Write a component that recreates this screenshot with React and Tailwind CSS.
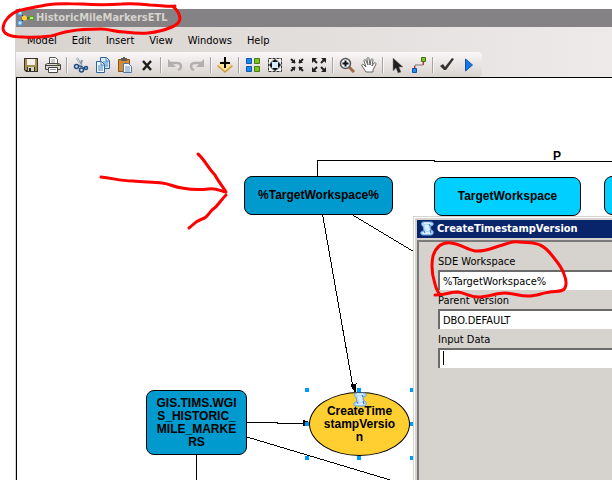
import { useState } from "react";

// Toolbar drawings, all on a 16x16 grid
const icons = {
  save: (
    <>
      <path d="M1 1h14v14H3l-2-2z" fill="#3a352b" />
      <path d="M2 2h2v11H2zM12 2h2v12h-2z" fill="#a88f4c" />
      <path d="M4 2h8v6H4z" fill="#f4f1ea" />
      <path d="M3 8h10v2H3z" fill="#a88f4c" />
      <path d="M5 10h6v4H5z" fill="#d8d4cc" />
      <path d="M6 11h2v3H6z" fill="#222" />
    </>
  ),
  print: (
    <>
      <path d="M4.500.5h6l2 2v4h-8z" fill="#fff" stroke="#555" />
      <path d="M6 3h4M6 5h4" stroke="#999" />
      <path d="M.5 7.500l2-1h11l2 1v5H.5z" fill="#dedad3" stroke="#444" />
      <path d="M1 8.500h14" stroke="#444" />
      <path d="M3.500 10.500h9v5h-9z" fill="#fff" stroke="#444" />
      <path d="M12 7.500h2" stroke="#6ea81c" />
      <path d="M5 12.500h6" stroke="#999" />
    </>
  ),
  cut: (
    <>
      <path d="M4 1l5 9M9 3L7 10" stroke="#8092a4" strokeWidth="2" fill="none" />
      <path d="M4 1l4 8" stroke="#dfe6ee" fill="none" />
      <circle cx="3.500" cy="9.500" r="2" fill="none" stroke="#1f4b86" strokeWidth="1.500" />
      <circle cx="8.500" cy="13" r="2" fill="none" stroke="#1f4b86" strokeWidth="1.500" />
      <circle cx="13" cy="11" r="1.500" fill="none" stroke="#1f4b86" strokeWidth="1.500" />
      <path d="M5 9h3l3 2" stroke="#1f4b86" fill="none" />
    </>
  ),
  copy: (
    <>
      <path d="M5.500.5h6l3 3v8h-9z" fill="#dcebfa" stroke="#2d649d" />
      <path d="M11 1v3h3M8 5h5M8 7h5M8 9h5" stroke="#4f87bd" fill="none" />
      <path d="M1.500 4.500h5l3 3v8h-8z" fill="#eef6ff" stroke="#2d649d" />
      <path d="M6 5v3h3M3 9h5M3 11h5M3 13h5" stroke="#4f87bd" fill="none" />
    </>
  ),
  paste: (
    <>
      <path d="M1.500 2.500h11v12h-11z" fill="#d18a35" stroke="#8a5318" />
      <path d="M4 1h6v3H4z" fill="#5e5a55" />
      <path d="M6 0h2v2H6z" fill="#5e5a55" />
      <path d="M6.500 6.500h5l3 3v6h-8z" fill="#f2f7fd" stroke="#52779e" />
      <path d="M8 10h5M8 12h5M8 14h5" stroke="#6b98c6" />
    </>
  ),
  remove: <path d="M4 4l8 9M12 4l-8 9" stroke="#1d1d1d" strokeWidth="2.500" fill="none" />,
  undo: (
    <>
      <path d="M4 6h6c4 0 5 3 3 6l-2 1" stroke="#b3afaf" strokeWidth="2.500" fill="none" />
      <path d="M1 2v8h8z" fill="#b3afaf" />
    </>
  ),
  redo: (
    <>
      <path d="M12 6H6c-4 0-5 3-3 6l2 1" stroke="#b3afaf" strokeWidth="2.500" fill="none" />
      <path d="M15 2v8H7z" fill="#b3afaf" />
    </>
  ),
  add: (
    <>
      <path d="M0 9l8-6 8 6-8 7z" fill="#c99a38" />
      <path d="M1 8l7-5 7 5-7 6z" fill="#fbe29a" />
      <path d="M8 0v11M3 6h10" stroke="#000" strokeWidth="2" />
    </>
  ),
  tiles: (
    <>
      <path d="M1.500 1.500h5v5h-5zM1.500 9.500h5v5h-5z" fill="#1c86f2" stroke="#0a58b4" />
      <path d="M9.500 1.500h5v5h-5zM9.500 9.500h5v5h-5z" fill="#7fc31c" stroke="#437f0a" />
    </>
  ),
  extent: (
    <>
      <path d="M1.500 1.500h13v13h-13z" fill="#f6f6f6" stroke="#333" strokeDasharray="3 1" />
      <circle cx="8" cy="8" r="5" fill="#d5edf8" stroke="#8a8a8a" />
      <path d="M8 2l3 3H5zM8 14l3-3H5zM2 8l3-3v6zM14 8l-3-3v6z" fill="#111" />
    </>
  ),
  shrink: (
    <>
      <path d="M2 2l4 4M14 2l-4 4M2 14l4-4M14 14l-4-4" stroke="#222" strokeWidth="2" />
      <path d="M6 2v4H2zM10 2v4h4zM6 14v-4H2zM10 14v-4h4z" fill="#222" />
    </>
  ),
  grow: (
    <>
      <path d="M2 2l4 4M14 2l-4 4M2 14l4-4M14 14l-4-4" stroke="#222" strokeWidth="2" />
      <path d="M1 1h5L1 6zM15 1h-5l5 5zM1 15h5l-5-5zM15 15h-5l5-5z" fill="#222" />
    </>
  ),
  zoom: (
    <>
      <path d="M10 10l5 5" stroke="#a5694d" strokeWidth="3" />
      <circle cx="6.500" cy="6.500" r="5" fill="#eef7fc" stroke="#555" strokeWidth="1.500" />
      <path d="M6.500 3.500v6M3.500 6.500h6" stroke="#111" strokeWidth="2" />
    </>
  ),
  pan: (
    <path
      d="M5 15L1 9c-1-2 1-2 2-1l2 2-2-6c0-2 2-2 2 0l2 4-1-6c0-2 2-2 2 0l1 6 1-5c0-2 2-1 2 0l-1 6 2-3c1-1 2 0 2 1l-3 6v2z"
      fill="#fff"
      stroke="#666"
    />
  ),
  select: <path d="M4 1v13l3-3 2 5 3-1-2-5h4z" fill="#1f1f1f" stroke="#888" strokeWidth=".5" />,
  connect: (
    <>
      <path d="M4 11V8h8V5" stroke="#777" fill="none" />
      <path d="M3.500 9v3M12.500 5v3" stroke="#e02020" />
      <path d="M10.500.5h4v4h-4z" fill="#86c51e" stroke="#3c720b" />
      <path d="M1.500 11.500h4v4h-4z" fill="#2a8cf0" stroke="#0d4ea6" />
    </>
  ),
  check: <path d="M1 9l3-2 2 3 7-9 2 1-8 11H5z" fill="#333" />,
  run: <path d="M4.500 2v12l7-6z" fill="#1877e6" stroke="#0c55ae" />,
};

const toolGroups = [
  ["save", "print"],
  ["cut", "copy", "paste", "remove"],
  ["undo", "redo"],
  ["add"],
  ["tiles", "extent", "shrink", "grow"],
  ["zoom", "pan"],
  ["select", "connect"],
  ["check", "run"],
];

const menus = ["Model", "Edit", "Insert", "View", "Windows", "Help"];

const ScriptIcon = ({ className }) => (
  <svg viewBox="0 0 16 16" className={className}>
    <path d="M4 1h8c3 0 3 4 0 4h-1l1 4c3 0 3 5 0 5H4c-3 0-3-4 0-4h1L4 5C2 5 2 1 4 1z" fill="#b5daf8" stroke="#6ba4d8" />
    <path d="M5 2h6M6 5h4M6 7h4M7 9h4M4 12h7" stroke="#fff" />
    <path d="M10 3l1 2M5 10l1 2M11 9l1 3" stroke="#2f6eae" fill="none" />
  </svg>
);

const ModelIcon = () => (
  <svg viewBox="0 0 18 16" className="h-4 w-[18px]">
    <path d="M4 3l5 5-5 5M9 8h5" stroke="#333" fill="none" />
    <path d="M2 1h4v4H2zM2 11h4v4H2z" fill="#c4e8ff" stroke="#3b96e0" />
    <circle cx="8.500" cy="8" r="2.500" fill="#ffd22e" />
    <path d="M13.500 6.500h4v3h-4z" fill="#b6f06a" stroke="#5aa51f" />
  </svg>
);

const Toolbar = () => (
  <div className="flex h-[25px] w-fit items-center rounded-r bg-linear-to-b from-[#fbf7f9] to-[#d9d3ce] pl-1 pr-0.5">
    {toolGroups.map((group, i) => (
      <div key={i} className="flex items-center">
        {i > 0 && <span className="mx-0.5 h-4 w-0.5 border-l border-[#a5a2a2] bg-[#f8f6f6]" />}
        {group.map((name) => (
          <button key={name} aria-label={name} className="flex h-6 w-[22px] items-center justify-center">
            <svg viewBox="0 0 16 16" className="h-4 w-4">
              {icons[name]}
            </svg>
          </button>
        ))}
      </div>
    ))}
  </div>
);

// Coordinates are relative to the canvas corner
const Connectors = () => (
  <svg className="absolute inset-0 h-full w-full" fill="none" stroke="#000" shapeRendering="crispEdges">
    <path d="M300.500 98V82.500H415l5 1H900" />
    <path d="M305.500 136l31 176" />
    <path d="M334 136l90 54" />
    <path d="M230 344.500h30l1 1h31" />
    <path d="M230 359l190 57" />
    <path d="M179.500 376v60" />
    <path d="M334 307l5-1-1 8zM286 342v6l7-3z" fill="#000" />
  </svg>
);

const handles = [
  "left-[288px] top-[310px]",
  "left-[340px] top-[310px]",
  "left-[393px] top-[310px]",
  "left-[288px] top-[344px]",
  "left-[393px] top-[344px]",
  "left-[288px] top-[378px]",
  "left-[340px] top-[378px]",
  "left-[393px] top-[378px]",
];

const nodeBase =
  "absolute flex flex-col items-center justify-center border border-black text-center text-[12px] leading-[13px] font-bold";

const Canvas = () => (
  <main className="relative flex-1 overflow-hidden border-t border-l border-black bg-white font-['Liberation_Sans',Arial,sans-serif]">
    <Connectors />
    <span className="absolute left-[536px] top-[72px] text-[12px] leading-[13px] font-bold">P</span>
    <div className={`${nodeBase} left-[227px] top-[98px] h-[39px] w-[149px] rounded-lg bg-[#009ace]`}>
      %TargetWorkspace%
    </div>
    <div className={`${nodeBase} left-[417px] top-[99px] h-[39px] w-[147px] rounded-lg bg-[#00cfff]`}>
      TargetWorkspace
    </div>
    <div className={`${nodeBase} left-[587px] top-[98px] h-[39px] w-[147px] rounded-lg bg-[#00cfff]`} />
    <div className={`${nodeBase} left-[129px] top-[312px] h-[65px] w-[101px] rounded-lg bg-[#009ace]`}>
      <span>GIS.TIMS.WGI</span>
      <span>S_HISTORIC_</span>
      <span>MILE_MARKE</span>
      <span>RS</span>
    </div>
    {handles.map((place) => (
      <i key={place} className={`absolute h-1 w-1 bg-[#009aff] ${place}`} />
    ))}
    <div className={`${nodeBase} left-[292px] top-[314px] h-[64px] w-[101px] rounded-[50%] bg-[#ffcf31]`}>
      <span>CreateTime</span>
      <span>stampVersio</span>
      <span>n</span>
    </div>
    <ScriptIcon className="absolute left-[335px] top-[314px] h-4 w-4" />
  </main>
);

const Field = ({ id, label, value, onChange }) => (
  <div>
    <label htmlFor={id} className="block h-4 leading-4">
      {label}
    </label>
    <input
      id={id}
      value={value}
      onChange={onChange}
      className="block h-5 w-full border-t-2 border-l-2 border-t-[#6b6b6b] border-l-[#6b6b6b] bg-white pl-[3px] outline-none"
    />
  </div>
);

const VersionDialog = () => {
  const [values, setValues] = useState({
    "SDE Workspace": "%TargetWorkspace%",
    "Parent Version": "DBO.DEFAULT",
    "Input Data": "",
  });

  return (
    <section className="absolute top-[216px] right-0 bottom-0 left-[413px] flex flex-col border-t border-l border-[#d6d3ce] bg-[#d6d3ce]">
      <div className="flex flex-1 flex-col border-t border-l border-white pt-0.5 pl-0.5">
        <h2 className="flex h-[18px] items-center gap-0.5 bg-[#08246b] pl-0.5 text-[11px] font-bold text-white">
          <ScriptIcon className="h-4 w-4" />
          CreateTimestampVersion
        </h2>
        <form className="mt-0.5 flex flex-1 flex-col gap-[3px] overflow-hidden border-t-2 border-l-2 border-[#7b7b7b] pt-3 pl-[19px]">
          {Object.keys(values).map((label) => (
            <Field
              key={label}
              id={label.replace(" ", "-")}
              label={label}
              value={values[label]}
              onChange={(e) => setValues({ ...values, [label]: e.target.value })}
            />
          ))}
        </form>
      </div>
      {/* text cursor of the empty field */}
      <span className="absolute top-[134px] left-[29px] h-[14px] w-px bg-black" />
    </section>
  );
};

const RedMarks = () => (
  <svg
    className="pointer-events-none absolute inset-0 h-full w-full"
    fill="none"
    stroke="#ff0000"
    strokeWidth="3"
    strokeLinecap="round"
    strokeLinejoin="round"
  >
    <path d="M20 10C9 14 3 22 3 29c1 6 9 8 20 8 12 1 20 0 28-1 8-2 12-4 20-5 10-2 20-2 30-2 9 0 14 3 23 3 9 1 16 2 24 1 9-1 17-3 24-6 5-2 8-5 8-9-1-6-3-9-8-12M175 6c-7 1-16-1-25-1-10-1-18-2-28-1-14 1-26 1-40 0-12 0-24-1-36 1-10 2-18 3-28 6" />
    <path d="M101 177c12 1 18 4 32 4 12 1 21 1 29 2 9 1 11 4 20 5 11 2 18 2 26 1 10-1 12 2 18 3M198 154c7 6 10 14 17 21 3 6 8 12 11 17M226 195c-6 6-8 11-14 15-4 4-5 8-10 9-6 2-8 5-13 9" />
    <path d="M475 251c-9-2-15-7-24-8-9-1-15 4-18 13-2 10-1 19 2 28 1 4 2 7 4 9M475 251c10 1 17-3 24-5 8-2 12-5 20-4 8 1 15 0 21 3 7 3 10 8 14 13 5 6 8 10 10 16 2 5 3 10 1 14-2 4-8 3-15 4-8 1-14 4-22 4-9 0-15-3-23-3-9 0-17 4-27 4-8 0-12-4-20-5-8 0-14 3-23 3" />
  </svg>
);

export default function App() {
  return (
    <div className="relative flex min-h-screen flex-col overflow-hidden bg-white pt-[9px] pl-[15px] font-['DejaVu_Sans_Condensed','DejaVu_Sans',sans-serif] text-[11px] text-black">
      <div className="flex flex-1 flex-col bg-linear-to-r from-[#d8d3ce] to-[#eeeaea] pl-px">
        <header className="flex h-[18px] items-center gap-0.5 bg-[#848284] text-[11px] font-bold text-[#d6d3ce]">
          <ModelIcon />
          <h1>HistoricMileMarkersETL</h1>
        </header>
        <nav className="flex h-[25px] items-center gap-[15px] pt-1 pl-[11px]">
          {menus.map((menu) => (
            <button key={menu}>{menu}</button>
          ))}
        </nav>
        <Toolbar />
        <Canvas />
      </div>
      <VersionDialog />
      <RedMarks />
    </div>
  );
}
